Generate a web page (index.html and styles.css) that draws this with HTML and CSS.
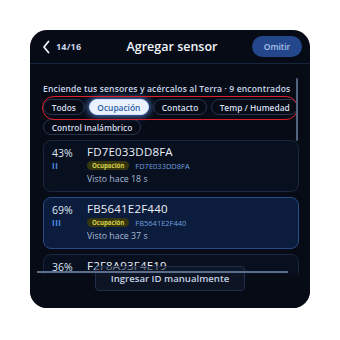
FILE: index.html
```html
<!DOCTYPE html>
<html lang="es">
<head>
<meta charset="utf-8">
<link rel="stylesheet" href="styles.css">
</head>
<body>
<div class="device">
  <header class="header">
    <div class="back">
      <svg class="chev" width="8" height="14" viewBox="0 0 8 14"><path d="M6.5 1.5 L2 7 L6.5 12.5" fill="none" stroke="#f2f6fc" stroke-width="1.8" stroke-linecap="round" stroke-linejoin="round"/></svg>
      <span class="step">14/16</span>
    </div>
    <h1 class="title">Agregar sensor</h1>
    <button class="skip">Omitir</button>
  </header>
  <main class="content">
    <p class="hint">Enciende tus sensores y acércalos al Terra · 9 encontrados</p>
    <div class="chips">
      <span class="chip">Todos</span>
      <span class="chip active">Ocupación</span>
      <span class="chip">Contacto</span>
      <span class="chip">Temp / Humedad</span>
      <span class="chip">Control Inalámbrico</span>
    </div>
    <div class="list">
      <div class="card">
        <div class="sig"><span class="pct">43%</span><span class="bars">II</span></div>
        <div class="info">
          <div class="name">FD7E033DD8FA</div>
          <div class="meta"><span class="tag">Ocupación</span><span class="id">FD7E033DD8FA</span></div>
          <div class="seen">Visto hace 18 s</div>
        </div>
      </div>
      <div class="card sel">
        <div class="sig"><span class="pct">69%</span><span class="bars">III</span></div>
        <div class="info">
          <div class="name">FB5641E2F440</div>
          <div class="meta"><span class="tag">Ocupación</span><span class="id">FB5641E2F440</span></div>
          <div class="seen">Visto hace 37 s</div>
        </div>
      </div>
      <div class="card">
        <div class="sig"><span class="pct">36%</span></div>
        <div class="info">
          <div class="name">F2F8A93F4E19</div>
          <div class="meta"><span class="tag tag-blank"></span></div>
        </div>
      </div>
    </div>
    <div class="ring"></div>
    <div class="scroll"></div>
  </main>
  <div class="footer">
    <div class="hline"></div>
    <button class="manual">Ingresar ID manualmente</button>
  </div>
</div>
</body>
</html>
```
FILE: styles.css
```css
* { box-sizing: border-box; }
html, body { margin: 0; padding: 0; background: #ffffff; }
body { width: 340px; height: 340px; overflow: hidden; font-family: "Open Sans", "Noto Sans", sans-serif; }

.device {
  position: relative;
  margin: 30px 0 0 30px;
  width: 280px;
  height: 278px;
  border-radius: 17px;
  background: #060b16;
  overflow: hidden;
  display: flex;
  flex-direction: column;
}

.header {
  height: 34px;
  flex: none;
  display: flex;
  align-items: center;
  padding: 0 8px 0 12px;
  border-bottom: 1px solid #18263d;
}
.back { display: flex; align-items: center; gap: 6px; width: 80px; }
.chev { display: block; }
.step { color: #c9d5ea; font-size: 9px; font-weight: 700; letter-spacing: 0.2px; }
.title {
  flex: 1;
  margin: 0;
  text-align: center;
  color: #f1f5fb;
  font-size: 12.5px;
  font-weight: 600;
  padding-right: 30px;
}
.skip {
  width: 50px;
  height: 21px;
  border: 0;
  border-radius: 11px;
  background: #23478a;
  color: #a9c3ec;
  font-family: inherit;
  font-size: 8.5px;
  font-weight: 600;
  padding: 0;
}

.content { position: relative; flex: 1; padding: 20px 11px 0 13px; overflow: hidden; }
.hint {
  margin: 0 0 4px;
  color: #cbd7ea;
  font-size: 8.6px;
  font-weight: 600;
  line-height: 11px;
  letter-spacing: 0.12px;
  white-space: nowrap;
}
.chips { display: flex; flex-wrap: wrap; gap: 4px 4px; width: 258px; }
.chip {
  height: 16px;
  display: flex;
  align-items: center;
  padding: 0 7.7px;
  border: 1px solid #273450;
  border-radius: 9px;
  color: #d6deec;
  font-size: 8.4px;
  font-weight: 600;
  white-space: nowrap;
}
.chip.active {
  background: #eaf2ff;
  color: #2c5ea8;
  border-color: #cfe0ff;
  box-shadow: 0 0 7px 1px rgba(110, 160, 255, 0.8);
}

.list {
  display: flex;
  flex-direction: column;
  gap: 5px;
  margin-top: 5px;
  width: 256px;
  height: 136px;
  overflow: hidden;
}
.card {
  height: 52px;
  flex: none;
  display: flex;
  border: 1px solid #1b2740;
  border-radius: 8px;
  background: #08101f;
  padding: 3px 8px 0 8px;
}
.card.sel { background: #0c1c3c; border-color: #2b4a88; }
.sig { width: 35px; display: flex; flex-direction: column; padding-top: 3px; }
.pct { color: #dfe7f3; font-size: 10.5px; font-weight: 500; line-height: 13px; }
.bars { color: #4a8ee6; font-size: 8px; font-weight: 700; letter-spacing: 0.5px; line-height: 10px; margin-top: 1px; }
.info { display: flex; flex-direction: column; }
.name { color: #ecf1f9; font-size: 11.5px; font-weight: 500; line-height: 15px; letter-spacing: 0.2px; }
.meta { display: flex; align-items: center; gap: 6px; margin-top: 2px; height: 9px; }
.tag {
  background: #35360f;
  color: #d7d24a;
  font-size: 6.1px;
  font-weight: 700;
  padding: 1px 5px;
  border-radius: 5px;
  line-height: 7px;
}
.tag-blank { width: 38px; height: 9px; opacity: 0.6; }
.id { color: #6f9fdf; font-size: 7.5px; font-weight: 500; }
.seen { color: #a7bbd7; font-size: 8.8px; font-weight: 500; margin-top: 4px; line-height: 11px; }

.ring {
  position: absolute;
  left: 12px;
  top: 32px;
  width: 256px;
  height: 24px;
  border: 1.5px solid #e01d2a;
  border-radius: 12px;
}
.scroll {
  position: absolute;
  right: 12px;
  top: 14px;
  width: 2px;
  height: 63px;
  border-radius: 1px;
  background: #51637f;
}

.footer {
  position: absolute;
  left: 0;
  right: 0;
  bottom: 0;
  height: 48px;
  display: flex;
  flex-direction: column;
  align-items: center;
  background: linear-gradient(to bottom, rgba(6, 11, 22, 0) 0px, rgba(6, 11, 22, 0) 10px, rgba(6, 11, 22, 0.85) 16px, #060b16 30px);
}
.hline {
  position: absolute;
  left: 7px;
  top: 11px;
  width: 251px;
  height: 1.5px;
  background: #5b6e8c;
}
.manual {
  margin-top: 6px;
  width: 150px;
  height: 25px;
  border: 1px solid #222f48;
  border-radius: 4px;
  background: rgba(20, 30, 50, 0.55);
  color: #c4d0e2;
  font-family: inherit;
  font-size: 9.6px;
  font-weight: 600;
  padding: 0;
}
```
